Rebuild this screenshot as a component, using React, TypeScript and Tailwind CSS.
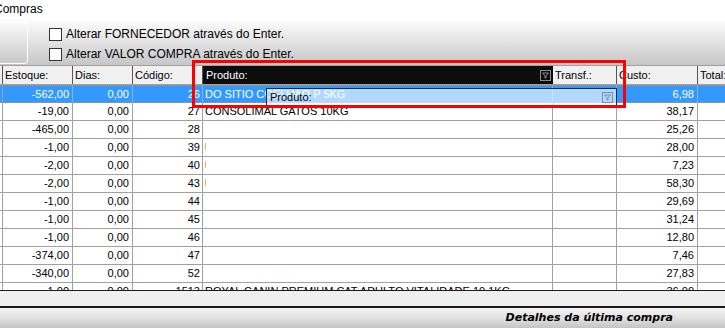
import React from "react";

type Row = {
  est: string;
  dias: string;
  cod: string;
  prod: string;
  custo: string;
  mark?: boolean;
};

const rows: Row[] = [
  { est: "-562,00", dias: "0,00", cod: "26", prod: "DO SITIO COELHAO P 5KG", custo: "6,98" },
  { est: "-19,00", dias: "0,00", cod: "27", prod: "CONSOLIMAL GATOS 10KG", custo: "38,17" },
  { est: "-465,00", dias: "0,00", cod: "28", prod: "", custo: "25,26" },
  { est: "-1,00", dias: "0,00", cod: "39", prod: "", custo: "28,00", mark: true },
  { est: "-2,00", dias: "0,00", cod: "40", prod: "", custo: "7,23", mark: true },
  { est: "-2,00", dias: "0,00", cod: "43", prod: "", custo: "58,30", mark: true },
  { est: "-1,00", dias: "0,00", cod: "44", prod: "", custo: "29,69" },
  { est: "-1,00", dias: "0,00", cod: "45", prod: "", custo: "31,24" },
  { est: "-1,00", dias: "0,00", cod: "46", prod: "", custo: "12,80" },
  { est: "-374,00", dias: "0,00", cod: "47", prod: "", custo: "7,46" },
  { est: "-340,00", dias: "0,00", cod: "52", prod: "", custo: "27,83" },
  {
    est: "-1,00",
    dias: "0,00",
    cod: "1513",
    prod: "ROYAL CANIN PREMIUM CAT ADULTO VITALIDADE 10,1KG",
    custo: "36,00",
  },
];

const cols = "grid grid-cols-[3px_70px_60px_70px_350px_64px_81px_1fr]";

const FilterIcon = ({ color = "#8a8a8a" }: { color?: string }) => (
  <svg width="11" height="11" viewBox="0 0 11 11">
    <rect x="0.5" y="0.5" width="10" height="10" fill="none" stroke={color} />
    <path d="M2.5 3h6L6 5.8V8H5V5.8z" fill="none" stroke={color} strokeWidth="1" />
  </svg>
);

const Check = ({ label }: { label: string }) => (
  <div className="flex items-center gap-[4px] h-[20px]">
    <div className="w-[13px] h-[13px] border border-[#333] bg-white" />
    <span className="text-[12px] text-black leading-none">{label}</span>
  </div>
);

const App = () => {
  return (
    <div
      className="relative w-[725px] h-[328px] overflow-hidden bg-white flex flex-col"
      style={{ fontFamily: '"Liberation Sans", Arial, sans-serif' }}
    >
      {/* top panel */}
      <div className="h-[65px] flex bg-[linear-gradient(to_bottom,#ffffff_0%,#ffffff_28%,#c6c6c6_100%)]">
        <div className="w-[28px] flex flex-col">
          <span className="self-start text-[12px] -translate-x-[6px] mt-[2px] leading-[14px] whitespace-nowrap">
            Compras
          </span>
          <div className="mt-[6px] h-[42px] w-[28px] border-r border-b border-t border-white rounded-tr-[3px] rounded-br-[4px]" />
        </div>
        <div className="flex flex-col ml-[21px] pt-[24px]">
          <Check label="Alterar FORNECEDOR através do Enter." />
          <Check label="Alterar VALOR COMPRA através do Enter." />
        </div>
      </div>

      {/* grid */}
      <div className="h-[225px] overflow-hidden border-t border-[#a0a0a0] text-[11px]">
        <div className={`${cols} h-[19px] bg-[#f0f0f0] border-b border-[#a0a0a0]`}>
          <div className="border-r border-[#555]" />
          <div className="border-r border-[#555] pl-[2px] leading-[18px]">Estoque:</div>
          <div className="border-r border-[#555] pl-[2px] leading-[18px]">Dias:</div>
          <div className="border-r border-[#555] pl-[2px] leading-[18px]">Código:</div>
          <div className="bg-[#0d0d0d] text-white pl-[3px] leading-[18px] flex items-center justify-between pr-[2px]">
            <span>Produto:</span>
            <FilterIcon />
          </div>
          <div className="border-r border-[#555] pl-[2px] leading-[18px]">Transf.:</div>
          <div className="border-r border-[#555] pl-[2px] leading-[18px]">Custo:</div>
          <div className="pl-[2px] leading-[18px]">Total:</div>
        </div>
        {rows.map((r, i) => {
          const sel = i === 0;
          const line = sel ? "border-r border-[#7fb6f0]" : "border-r border-[#a0a0a0]";
          return (
            <div
              key={i}
              className={`${cols} h-[18px] leading-[17px] ${
                sel
                  ? "bg-[#3399ff] text-white border-y border-dotted border-[#e0902c]"
                  : "text-black border-b border-[#a0a0a0]"
              }`}
            >
              <div className="border-r border-[#a0a0a0]" />
              <div className={`${line} text-right pr-[3px]`}>{r.est}</div>
              <div className={`${line} text-right pr-[3px]`}>{r.dias}</div>
              <div className={`${line} text-right pr-[2px]`}>{r.cod}</div>
              <div className={`${line} pl-[2px] whitespace-nowrap overflow-hidden flex items-center`}>
                {r.prod}
                {r.mark && <span className="w-[1px] h-[7px] bg-[#f0b070] mb-[2px]" />}
              </div>
              <div className={line} />
              <div className={`${line} text-right pr-[3px]`}>{r.custo}</div>
              <div />
            </div>
          );
        })}
      </div>

      {/* footer */}
      <div className="h-[16px] bg-[#efefef] border-t border-[#1a1a1a]" />
      <div className="flex-1 border-t-2 border-[#1a1a1a] bg-[linear-gradient(to_bottom,#f4f4f4_0%,#dcdcdc_60%,#c4c4c4_100%)] flex items-center justify-end pr-[52px]">
        <span
          className="text-[11px] font-bold italic text-black"
          style={{ fontFamily: '"DejaVu Sans", Verdana, sans-serif' }}
        >
          Detalhes da última compra
        </span>
      </div>

      {/* dragged column header ghost */}
      <div className="absolute left-[266px] top-[88px] w-[351px] h-[18px] border border-[#1f2d3d] bg-[rgba(255,255,255,0.62)] flex items-center justify-between pl-[3px] pr-[3px] text-[11px] text-black">
        <span>Produto:</span>
        <FilterIcon color="#7a8ea6" />
      </div>

      {/* red highlight */}
      <div className="absolute left-[192px] top-[60px] w-[434px] h-[48px] border-[3px] border-[#ff0000]" />
    </div>
  );
};

export default App;
